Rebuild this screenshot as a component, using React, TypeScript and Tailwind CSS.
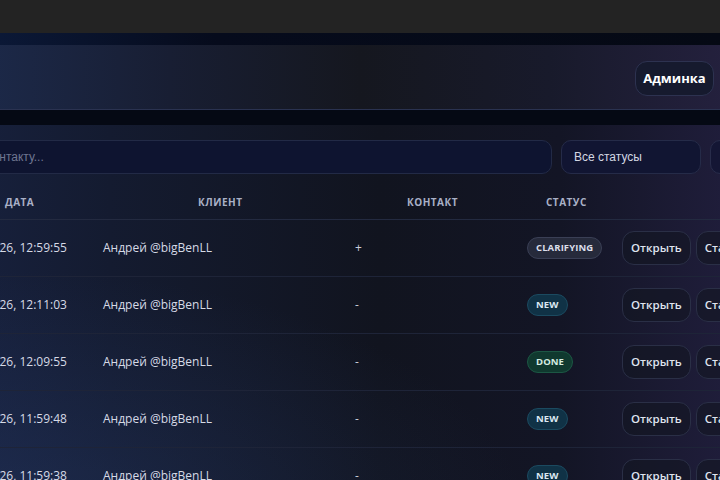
const rows = [
  { date: "13.01.2026, 12:59:55", client: "Андрей @bigBenLL", contact: "+", status: "clarifying" },
  { date: "13.01.2026, 12:11:03", client: "Андрей @bigBenLL", contact: "-", status: "new" },
  { date: "13.01.2026, 12:09:55", client: "Андрей @bigBenLL", contact: "-", status: "done" },
  { date: "13.01.2026, 11:59:48", client: "Андрей @bigBenLL", contact: "-", status: "new" },
  { date: "13.01.2026, 11:59:38", client: "Андрей @bigBenLL", contact: "-", status: "new" },
];

const badgeStyles: Record<string, string> = {
  clarifying: "bg-[#262a3b] border-[#3a3f55] text-[#dcdfea]",
  new: "bg-[#103246] border-[#1b4a60] text-[#dbe8f2]",
  done: "bg-[#10392f] border-[#1c5744] text-[#d5ece2]",
};

const StatusBadge = ({ status }: { status: string }) => (
  <span
    className={`inline-flex h-[22px] items-center rounded-full border px-[8px] text-[9.5px] font-bold uppercase tracking-[0.01em] ${badgeStyles[status]}`}
  >
    {status}
  </span>
);

const ActionButton = ({ label }: { label: string }) => (
  <button
    type="button"
    className="h-[34px] shrink-0 rounded-xl border border-[#2a2f46] bg-[#12152299] px-[8px] text-[11.5px] font-semibold text-[#dfe3ee]"
  >
    {label}
  </button>
);

export default function App() {
  return (
    <div className="h-[480px] w-[720px] overflow-hidden bg-[#050a17] font-['Open_Sans',sans-serif]">
      <div className="h-[33px] bg-[#232323]" />

      <div className="bg-[linear-gradient(90deg,#0b1836_0%,#060b1c_30%,#050914_100%)] pt-3">
        {/* top header */}
        <div className="-ml-[20px] flex h-[65px] w-[760px] items-center justify-end border-b border-[#2a3250] bg-[linear-gradient(90deg,#1c2949_0%,#181e33_25%,#15171f_50%,#181a2b_75%,#25213f_100%)] pr-[26px] pt-[3px]">
          <button
            type="button"
            className="h-[35px] w-[79px] rounded-xl border border-[#2d3250] bg-[#161a2e] text-[13px] font-bold text-white"
          >
            Админка
          </button>
        </div>
      </div>

      <div className="h-[15px] bg-[#050914]" />

      {/* requests card */}
      <div className="-ml-[70px] h-[400px] w-[900px] bg-[radial-gradient(ellipse_at_8%_100%,rgba(38,58,104,0.45),transparent_45%),linear-gradient(90deg,#182240_0%,#141b30_20%,#11141f_50%,#131525_70%,#1f1d3a_88%,#241f40_100%)] pt-[15px]">
        <div className="-ml-[80px] flex gap-[9px]">
          <div className="flex h-[34px] w-[702px] shrink-0 items-center rounded-[10px] border border-[#222a46] bg-[#0e1430] pl-[12px] font-['Liberation_Sans',sans-serif] text-[12px] text-[#6f7690]">
            Поиск по клиенту или контакту...
          </div>
          <div className="flex h-[34px] w-[140px] shrink-0 items-center rounded-[10px] border border-[#252b48] bg-[#111532] pl-[12px] font-['Liberation_Sans',sans-serif] text-[12px] text-[#d3d7e3]">
            Все статусы
          </div>
          <div className="flex h-[34px] w-[140px] shrink-0 items-center rounded-[10px] border border-[#282c4a] bg-[#141634] pl-[12px] font-['Liberation_Sans',sans-serif] text-[12px] text-[#d3d7e3]">
            Все источники
          </div>
        </div>

        <div className="mt-[12px]">
          <div className="grid h-[34px] grid-cols-[170px_200px_180px_132px_1fr] items-center border-b border-[#232a40] text-[10px] font-bold uppercase tracking-[0.05em] text-[#a9b0c6]">
            <div className="pl-[75px]">Дата</div>
            <div className="pl-[98px]">Клиент</div>
            <div className="pl-[107px]">Контакт</div>
            <div className="pl-[66px]">Статус</div>
            <div />
          </div>

          {rows.map((row, i) => (
            <div
              key={i}
              className="grid h-[57px] grid-cols-[170px_200px_180px_132px_1fr] items-center border-b border-[#1e2438] text-[12px] text-[#d6dae6]"
            >
              <div className="pl-[22px]">{row.date}</div>
              <div className="pl-[3px]">{row.client}</div>
              <div className="pl-[55px] text-[#c9cdd9]">{row.contact}</div>
              <div className="pl-[47px]">
                <StatusBadge status={row.status} />
              </div>
              <div className="flex gap-[5px] pl-[10px]">
                <ActionButton label="Открыть" />
                <ActionButton label="Статус" />
              </div>
            </div>
          ))}
        </div>
      </div>
    </div>
  );
}
